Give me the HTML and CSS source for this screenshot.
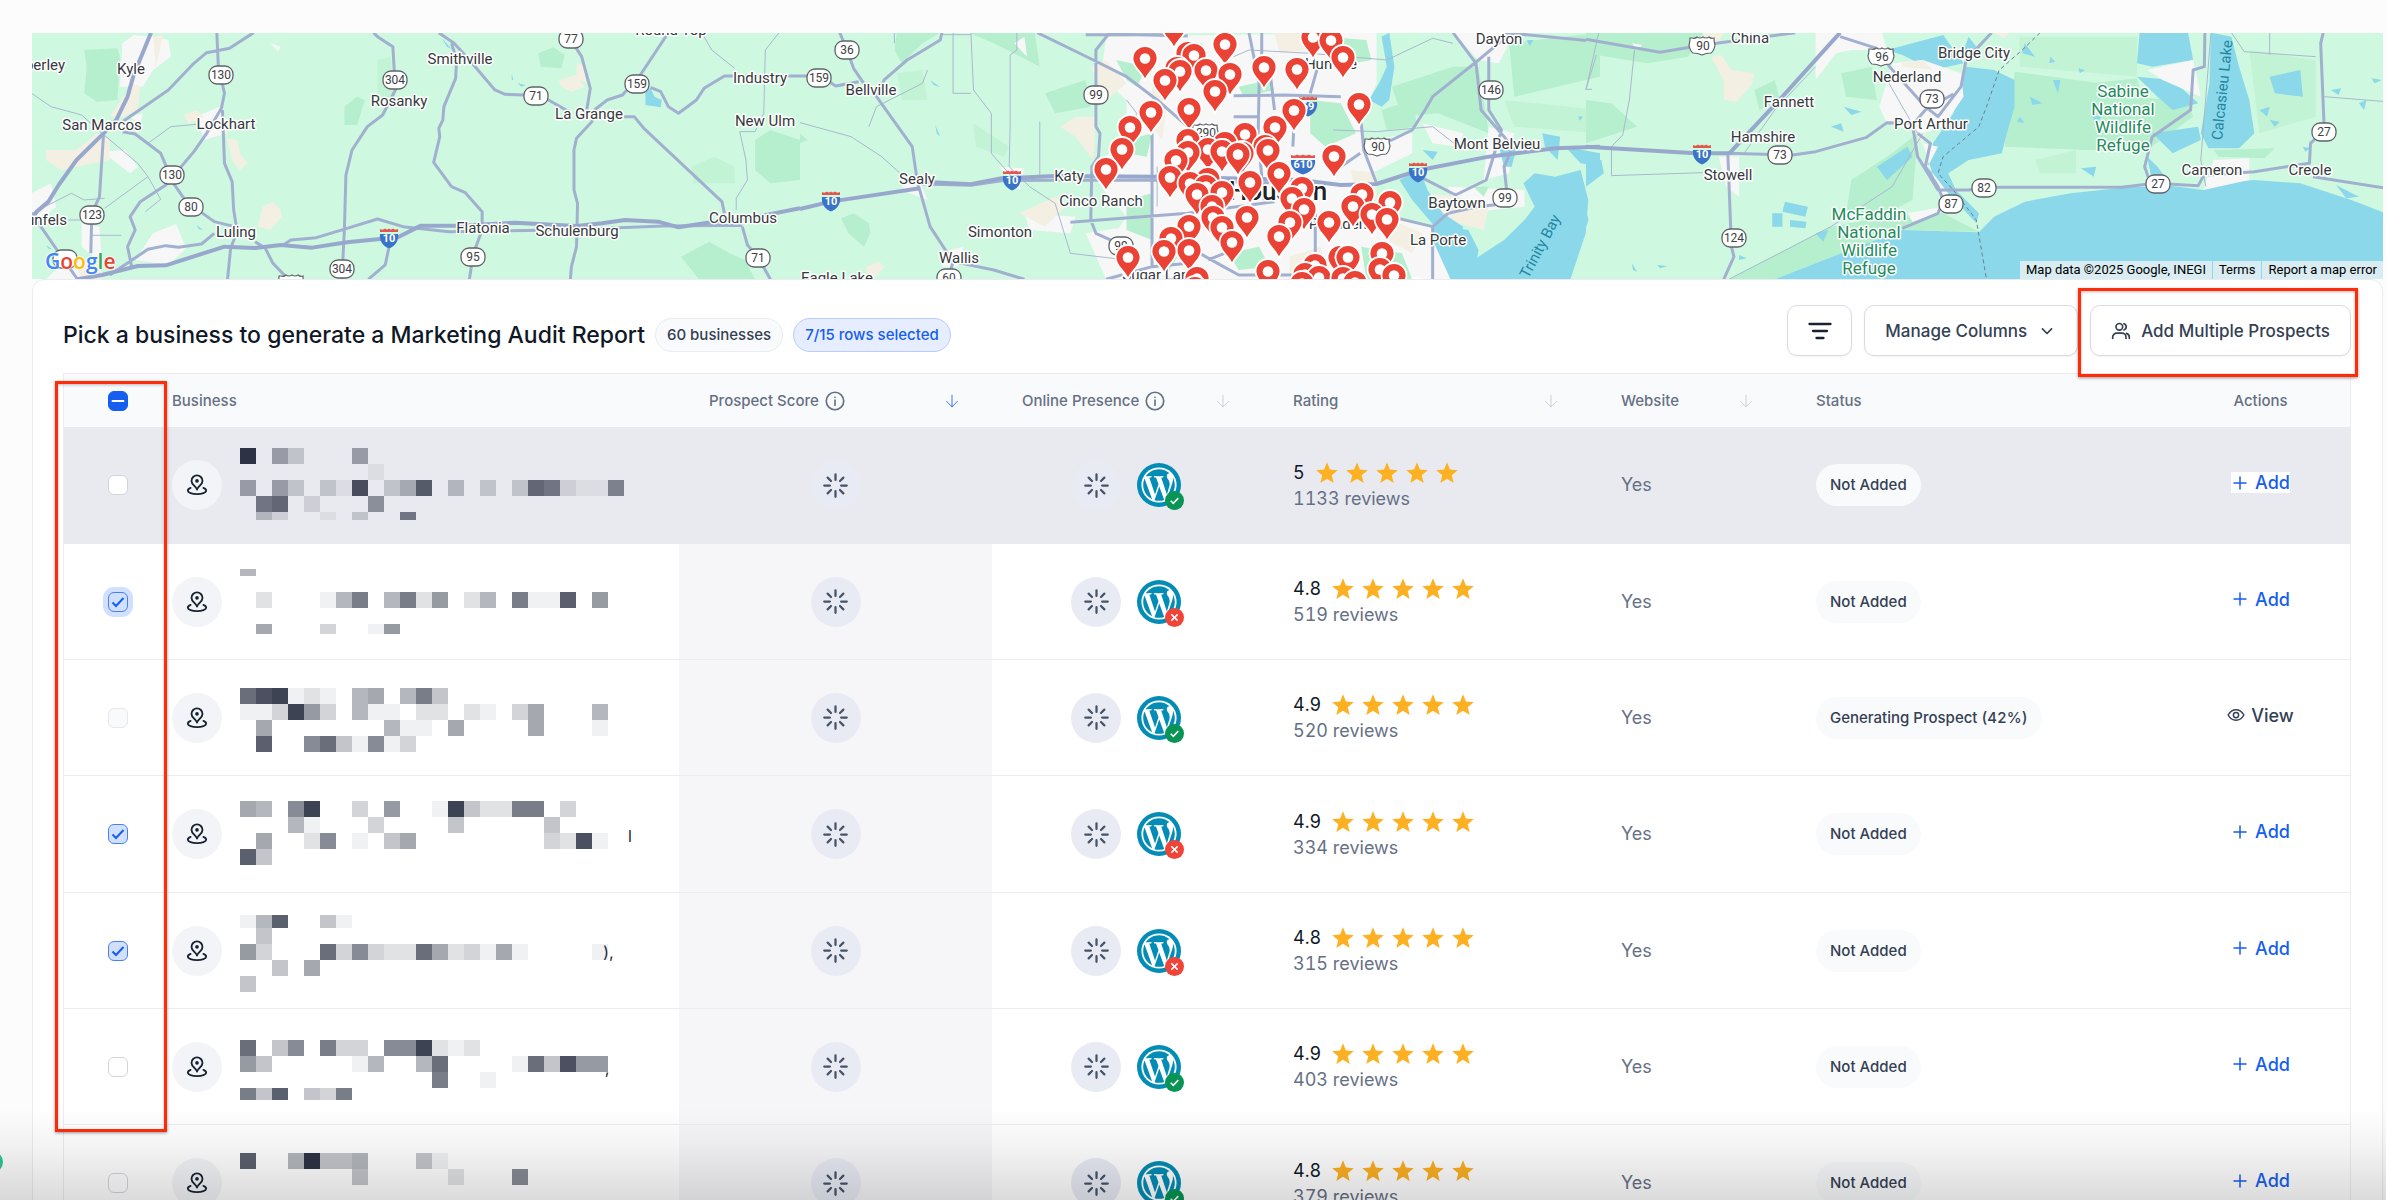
FILE: index.html
```html
<!DOCTYPE html>
<html lang="en">
<head>
<meta charset="utf-8">
<title>Marketing Audit Report</title>
<link rel="stylesheet" href="styles.css">
</head>
<body>
<svg class="sprite" aria-hidden="true">
  <symbol id="i-place" viewBox="0 0 24 24"><path d="M5 15.2C3.2 15.9 2 17 2 18.2C2 20.3 6.5 22 12 22s10-1.7 10-3.8c0-1.2-1.200-2.300-3-3M12 17c1-3.500 6-5.300 6-9.500A6 6 0 0 0 6 7.500C6 11.700 11 13.500 12 17Z"/><circle cx="12" cy="7.500" r="1"/></symbol>
  <symbol id="i-load" viewBox="0 0 24 24"><path d="M12 2v5M12 17v5M2 12h5M17 12h5M5 5l3 3M16 16l3 3M5 19l3-3M16 8l3-3"/></symbol>
  <symbol id="i-info" viewBox="0 0 24 24"><circle cx="12" cy="12" r="10.500"/><path d="M12 17v-6M12 7.600v.2"/></symbol>
  <symbol id="i-down" viewBox="0 0 24 24"><path d="M12 5v14M5.500 12.500 12 19l6.500-6.500"/></symbol>
  <symbol id="i-chevron" viewBox="0 0 24 24"><path d="m6.500 9.500 5.500 5.500 5.500-5.500"/></symbol>
  <symbol id="i-filter" viewBox="0 0 24 24"><path d="M3 6h18M6 12h12M9 18h6"/></symbol>
  <symbol id="i-users" viewBox="0 0 24 24"><circle cx="10" cy="7" r="4"/><path d="M2 21v-1.500A5 5 0 0 1 7 14.500h6a5 5 0 0 1 5 5V21M15.500 3.200a4 4 0 0 1 0 7.600M18.500 14.800a5 5 0 0 1 3.500 4.700V21"/></symbol>
  <symbol id="i-plus" viewBox="0 0 24 24"><path d="M12 4v16M4 12h16"/></symbol>
  <symbol id="i-eye" viewBox="0 0 24 24"><path d="M1.500 12C4 7.500 7.500 5 12 5s8 2.500 10.500 7C20 16.500 16.500 19 12 19S4 16.500 1.500 12Z"/><circle cx="12" cy="12" r="3.500"/></symbol>
  <symbol id="i-star" viewBox="0 0 24 24"><path d="m12 1.300 2.900 7.300 7.900.6-6.100 5.100 2 7.700L12 17.700l-6.700 4.300 2-7.700L1.200 9.200l7.900-.6Z"/></symbol>
  <symbol id="i-wp" viewBox="0 0 44 44"><circle cx="22" cy="22" r="22" fill="#038cb5"/><circle cx="22" cy="22" r="17.600" fill="#fff"/><path fill="#038cb5" transform="translate(4.430 4.430) scale(1.464)" d="M21.469 6.825c.84 1.537 1.318 3.300 1.318 5.175 0 3.979-2.156 7.456-5.363 9.325l3.295-9.527c.615-1.540.820-2.771.820-3.864 0-.405-.026-.780-.070-1.110m-7.981.105c.647-.030 1.232-.105 1.232-.105.582-.075.514-.930-.067-.899 0 0-1.755.135-2.880.135-1.064 0-2.850-.150-2.850-.150-.585-.030-.661.855-.075.885 0 0 .540.061 1.125.090l1.680 4.605-2.370 7.080L5.354 6.900c.649-.030 1.234-.100 1.234-.100.585-.075.516-.930-.065-.896 0 0-1.746.138-2.874.138-.200 0-.438-.008-.690-.015C4.911 3.150 8.235 1.215 12 1.215c2.809 0 5.365 1.072 7.286 2.833-.046-.003-.091-.009-.141-.009-1.060 0-1.812.923-1.812 1.914 0 .890.513 1.643 1.060 2.531.411.720.890 1.643.890 2.977 0 .915-.354 1.994-.821 3.479l-1.075 3.585-3.900-11.610zM12 22.784c-1.059 0-2.081-.153-3.048-.437l3.237-9.406 3.315 9.087c.024.053.050.101.078.149-1.120.393-2.325.609-3.582.609M1.211 12c0-1.564.336-3.050.935-4.390L7.290 21.709C3.694 19.960 1.212 16.271 1.211 12"/></symbol>
  <symbol id="i-ok" viewBox="0 0 20 20"><circle cx="10" cy="10" r="10" fill="#079455"/><path d="m6 10.300 2.700 2.700L14 7.500" fill="none" stroke="#fff" stroke-width="1.600"/></symbol>
  <symbol id="i-no" viewBox="0 0 20 20"><circle cx="10" cy="10" r="10" fill="#f04438"/><path d="m6.700 6.700 6.600 6.600m0-6.600-6.600 6.600" fill="none" stroke="#fff" stroke-width="1.600"/></symbol>
</svg>

<main class="page">
  <section class="map" aria-label="Map">
    <svg class="map-canvas" viewBox="32 33 2351 246" preserveAspectRatio="xMidYMid slice">
      <defs>
        <g id="pin"><path d="M0 0C-2-8.500-12.500-13-12.500-22.500A12.500 12.500 0 0 1 12.500-22.500C12.500-13 2-8.500 0 0Z" fill="#ea4335" stroke="#fff" stroke-width="1.800"/><circle cy="-22.500" r="5.300" fill="#fff"/></g>
        <g id="s-state"><rect x="-12" y="-9" width="24" height="18" rx="8" fill="#fff" stroke="#5f6368" stroke-width="1.300"/></g>
        <g id="s-us"><path d="M-11-8q3 1 5-1 3 2 6 0 3 2 6 0 2 2 5 1 0 4 1 7-1 6-4 8-5 0-9 2-4-2-9-2-3-2-4-8 1-3 1-7Z" fill="#fff" stroke="#5f6368" stroke-width="1.200"/></g>
        <g id="s-int"><path d="M-9-4C-10 3-6 8 0 10.500 6 8 10 3 9-4Z" fill="#3a74c8"/><path d="M-9-6v-3q3 1.500 5-.5 2 2 4 0 2 2 4 0 2 2 5 .5v3Z" fill="#e2574c"/></g>
        <g id="s-wide"><path d="M-12-4C-13 3-8 8 0 10.500 8 8 13 3 12-4Z" fill="#3a74c8"/><path d="M-12-6v-3q4 1.500 6-.5 3 2 6 0 3 2 6 0 2 2 6 .5v3Z" fill="#e2574c"/></g>
      </defs>
      <rect x="32" y="33" width="2351" height="246" fill="#cff8e0"/>

      <g transform="scale(.5102 .3333)">
        <path class="wood" d="M165 150 230 145 235 170 230 300 190 305 165 280 170 200ZM675 320 700 290 715 300 700 375 675 375ZM1055 160 1085 142 1107 165 1100 205 1060 200ZM1480 420 1510 390 1568 420V540L1510 550 1480 510ZM1375 488 1395 488V530L1375 525ZM1335 770 1390 725 1430 760 1460 780 1480 838H1370Z"/>
        <path class="wood pale" d="M740 180 765 170 775 300 740 290ZM1355 500 1400 470 1440 500V550H1360Z"/>
        <path class="urban" d="M240 130 262 105 300 110 330 120 335 170 300 210 280 260 235 260ZM385 350 430 320 445 400 400 420ZM200 455 245 450 270 500 255 520ZM265 780 300 700 345 672 365 745 330 795ZM62 580 100 550 110 620 62 680ZM160 670 195 680 200 790 160 740ZM530 130 550 140 545 155ZM90 838 130 780 200 790 190 838ZM255 350 280 340 275 375Z"/>
        <path class="sand" d="M300 110 320 105 305 200ZM260 250 275 260 270 330 240 350 215 350ZM90 450 150 450 190 400 215 420 215 480 150 500 120 510 90 480ZM360 345 385 330 400 350 370 372ZM445 415 465 420 470 460 485 490 470 510 455 480ZM505 680 515 620 535 605 550 630 552 650 530 690ZM1095 240 1130 225 1145 260 1120 275 1100 260ZM1130 190 1145 195 1150 250 1130 235ZM150 800 200 790 200 838H160Z"/>
        <path class="water" d="M1265 265H1275L1283 290 1297 300 1295 322 1265 315ZM866 115 886 148 876 140ZM1003 220 1006 240 1003 240ZM1015 250 1030 255 1022 260ZM385 675 398 690 390 688ZM90 735 102 748 95 746Z"/>
        <path class="minor" d="M1380 110 1395 150 1440 205M1527 98 1500 150 1497 340 1480 395H1450L1462 480 1465 540 1443 595V630M62 280 100 320 160 345 200 400 270 490 290 530 315 598 285 635M385 373 335 380 290 430M290 530 205 625M62 640 140 580 165 600 205 595M180 706H238M130 660H170"/>
        <path class="road" d="M425 98 428 200 440 280 434 325 405 400 380 455 325 555 275 605 255 650 265 690 250 740 258 800M497 98 450 145 405 158 380 190 330 270 240 365M436 330 440 490 455 545 458 630 465 695 452 745 446 838M240 395 265 402 315 460 340 550 365 605 420 665 460 680M203 400 195 590 180 640 178 760M62 640 130 790 152 838M555 735 570 720 620 713 680 685 740 657 790 680 880 695 1100 690 1300 678 1455 676M215 825 290 748 325 737 350 742 395 732 420 700M500 725 520 745 535 790 560 830M732 98 740 110 770 140 775 270 750 345 720 380 690 450 678 525 675 690 670 838M762 745 755 795 722 838M860 98 890 130 920 180 970 270 990 283 1030 285 1075 300 1115 335M885 130 895 180 893 235 870 320 868 360 860 385 862 410 850 487 885 560 912 578 945 635 945 690 928 760 920 838M1110 98 1140 170 1157 265 1150 330M1165 345 1160 365 1130 415 1125 450 1125 570 1132 610 1130 740 1120 800 1118 838M1310 98 1255 225 1220 285 1190 300 1165 330M1220 350 1243 350 1262 385 1415 605 1420 640M1455 680 1465 735 1485 770 1510 838M1275 262 1295 275 1310 320 1330 340 1365 300 1380 265 1420 228H1568"/>
        <path class="road wide" d="M296 98 262 225 250 290 228 360 203 400 150 480 115 555 95 605 72 635 62 660M152 838 200 825 270 798 325 796 440 740 500 744 550 735 612 743 680 727 780 712 825 677 900 677 1010 668 1130 678 1180 670 1225 660 1290 665 1330 682 1400 665 1450 660 1568 625"/>
      </g>

      <g transform="translate(800) scale(.5102 .3333)">
        <path class="wood" d="M80 655 105 640 135 670 138 700 125 740 95 700ZM190 98 275 98 240 130 200 190 185 150ZM330 98 460 98 470 200 380 130ZM1160 260 1280 200 1330 200 1350 400 1250 340 1180 350ZM1390 130 1568 98V230L1400 290ZM0 400 15 420 0 430ZM480 280 560 240 570 320 500 340Z"/>
        <path class="wood pale" d="M340 370 410 440 400 470 345 440ZM190 220 240 210 250 300 200 300ZM1380 300 1568 330V400L1400 380ZM600 98 700 98 690 160 620 170Z"/>
        <path class="urban" d="M600 110 1130 98 1130 250 1100 350 1110 500 1130 640 1240 680 1240 838H600V740L640 650 590 560 600 470 640 400V300L590 230ZM200 560 230 530 250 600 215 580ZM270 760 320 740 310 800 280 800ZM390 500 440 505 430 570ZM1280 98 1400 98 1370 190 1330 180ZM1220 370 1300 400 1290 440 1240 430ZM1350 380 1400 400 1390 520 1340 540ZM1200 700 1260 690 1300 838H1220ZM1040 440 1200 400 1200 460 1120 520 1040 530ZM440 640 540 650 530 700 450 690ZM1270 560 1420 570 1420 620 1290 640ZM420 130 440 110 445 170ZM560 700 640 680 640 838H600Z"/>
        <path class="sand" d="M510 380 540 350 580 350 575 480 540 410ZM570 200 600 180 640 250 600 300ZM430 640 500 590 520 620 480 680ZM130 800 155 785 165 800 145 838H130ZM1230 580 1290 590 1350 620 1340 690 1240 650ZM930 98 990 98 990 150 940 160ZM690 250 720 300 710 420 690 380ZM1080 510 1130 520 1130 600 1090 590ZM960 770 1020 740 1040 838H960ZM1160 660 1220 700 1200 760 1150 720Z"/>
        <path class="wood" d="M640 600 690 580 690 720 640 690ZM620 180 680 200 660 260 640 240ZM860 260 920 240 930 270 870 290ZM1000 300 1060 310 1090 400 1030 440 1000 400ZM640 420 690 400 680 470 640 460ZM1030 110 1110 120 1120 180 1050 200ZM840 760 900 740 920 800 860 810ZM1100 740 1180 760 1200 838H1110ZM690 760 740 770 720 820ZM740 140 790 130 780 160ZM1140 330 1200 300 1210 380 1150 390ZM1320 560 1350 560 1340 590Z"/>
        <path class="water" d="M1418 550 1440 520 1480 530 1530 510 1545 600 1540 700 1510 838H1285L1330 770 1380 720 1420 660 1440 620ZM1240 650 1270 680 1310 690 1330 750 1320 838H1275L1240 720ZM1175 540 1215 510 1230 570 1260 640 1300 680 1290 720 1250 690 1200 600ZM1140 110 1155 98 1165 200 1155 300 1140 320 1115 300 1135 250 1150 200ZM1455 400 1490 410 1485 480 1460 440ZM1370 440 1405 440 1395 500 1380 500ZM1220 450 1250 455 1240 480ZM1125 415 1150 430 1130 445ZM1500 440 1568 460V500L1530 490ZM1525 348 1535 350 1528 362ZM1424 120 1438 120 1430 138ZM265 375 275 410 268 400ZM255 240 275 262 262 255Z"/>
        <path class="minor" d="M425 98V150L412 165V370L410 500 450 560 500 610M415 530 375 460V340L340 270 335 98M300 98V280H335M0 368 100 410 160 470 200 525M250 210 240 250 150 320 135 380M500 610 530 760 640 780M850 170 880 150 1000 160 1150 180 1240 115M1130 395 1240 380 1290 440M1045 390 1130 395M1568 130 1540 270M1240 115 1280 130M640 300 660 340 640 420M700 500 700 620M275 104H335M470 365V540M185 98V130"/>
        <path class="road" d="M78 98 92 150 105 205 125 250 150 290 220 440 230 545 255 680 300 785 380 810 440 838M300 785 290 838M278 98 275 120 210 180 165 240 150 290M0 228H40L70 258 115 245M465 98 575 180 640 230 700 300 760 380M760 108 605 102 580 150V380L588 400 585 470 572 500 570 660 580 700 630 735M530 667 760 640 930 605M690 400V800M600 838 690 800 760 790M850 287 950 285 1060 290M880 98 900 250 898 400 905 530 910 600M905 98V200M920 200 930 330M1015 200 1000 280M968 380 966 440M1100 370 1105 450 1130 550M1098 460 1060 500M1130 430 1160 420 1200 390 1225 330 1240 290 1330 180 1385 110M1280 98 1325 190 1335 330 1380 410 1390 430M1350 170V330L1375 390 1345 540 1285 585 1215 530M1395 450 1380 500 1385 570M1130 640 1240 680V838M1240 680 1270 640 1330 620 1385 610M1380 98 1568 125M850 350H900M760 740 830 800 860 825H980M800 780 840 755M1010 640V760M240 552 335 556 395 542 500 541 700 541 920 548M560 104H720"/>
        <path class="road wide" d="M0 627 60 605 235 565M240 545 335 553 395 535 500 528 700 530 980 540 1060 555 1130 552 1215 510 1350 470 1480 445 1568 440"/>
      </g>

      <g transform="translate(1586) scale(.5102 .3333)">
        <path class="wood" d="M0 98H230L200 170 120 190 0 160ZM0 300 50 310 100 380 0 430ZM280 838 480 680 620 640 700 640 770 695 620 690 500 760 370 838ZM520 540 600 460 650 400 640 600 590 640 510 640ZM840 215 1000 248 1080 235 1090 290 1180 310 1190 350 1100 450 980 450 820 440 835 300ZM500 220 560 200 570 300 510 290ZM1230 450 1350 445 1330 475 1240 470ZM330 270 370 240 380 300 340 330Z"/>
        <path class="wood pale" d="M850 110 1080 110 1080 230 850 200ZM880 480 960 450 960 520 890 520ZM1300 150 1430 180 1430 350 1320 400Z"/>
        <path class="water" d="M370 838 500 760 620 690 770 697 800 650 860 605 950 580 1060 562 1150 558 1210 570 1240 550 1310 540 1400 550 1500 600 1568 640V838ZM745 200 800 210 840 240V320L825 400 815 460 750 480 710 520 725 570 770 640 765 670 735 620 690 560 670 500 680 430 720 340ZM1225 98 1265 110 1280 200 1300 300 1310 400 1280 445 1220 445 1205 400 1222 250ZM1085 98 1180 98 1190 180 1110 200 1080 190ZM1080 230 1150 240 1200 310 1150 330 1120 290ZM1110 400 1200 380 1205 420 1150 460ZM590 150 700 105 740 190 680 210 620 165ZM1340 230 1400 210 1405 290 1350 280ZM1100 470 1120 500 1140 540 1110 545ZM390 605 435 620 430 650 385 635ZM365 640H385V680H365ZM400 660 432 665 430 685 400 680ZM1470 555 1515 590 1490 595ZM0 470 30 480 35 520 0 560ZM0 630 5 660 0 680ZM480 380 500 370 505 395ZM505 320 540 335 520 345ZM870 290 895 310 875 315ZM915 240 930 240 925 280ZM965 205 978 210 968 220ZM990 345 1010 350 1000 370ZM970 505 1000 500 995 530ZM850 350 860 370 845 365ZM1320 330 1340 320 1335 350ZM1405 440 1420 445 1410 455ZM450 700 475 690 465 725ZM1460 270 1480 265 1475 285ZM1515 310 1530 300 1525 330ZM1540 235 1560 240 1545 250ZM570 500 630 440 640 470 590 540ZM750 110 770 150 740 150ZM90 790 100 815 92 810ZM140 795 160 798 145 805ZM300 765 315 775 300 780ZM860 130 880 170 855 160ZM910 170 920 185 908 190ZM1340 360 1360 365 1350 380ZM1280 310 1300 315 1290 330Z"/>
        <path class="urban" d="M450 98H580L590 150 520 150 490 160 450 240ZM600 190 660 180 735 220 740 290 700 380 660 400 590 370 575 320ZM660 430 690 440 670 500 720 600 700 620ZM1100 210 1190 180 1205 290 1130 240ZM1230 480 1300 475V540L1210 570ZM260 470 300 470 300 590 275 560ZM630 640 700 620 690 640 640 665ZM90 130 110 135 100 150Z"/>
        <path class="sand" d="M245 170 265 165 285 210 330 220 325 255 295 305 270 300 270 240ZM620 190 660 180 680 210 620 200ZM800 98 830 98 820 115ZM230 98 270 98 260 130 235 120ZM645 400 665 400 660 430Z"/>
        <path class="minor" d="M50 440V527L230 518M95 150 85 300 72 405 50 440M25 98 0 268M0 268H12M1265 98 1290 155 1430 170M1340 98V165M1447 290 1568 305M310 460 370 330 450 200M590 240 650 400M1225 98 1205 480 1215 560M660 400 600 560 480 680 280 838"/>
        <path class="road" d="M0 118 145 157 230 135 410 98M280 460 405 465 450 455 550 412 590 368 640 370M498 110 570 145 595 200 665 320 690 350 735 260 745 180 795 98M720 282 665 330 640 375 650 470 680 545 690 570 750 570 780 562 1050 562 1115 550 1200 557 1220 500M650 400 675 430 665 500 690 560 700 600 690 640 620 685M1213 98 1212 200 1190 210 1185 330 1110 410 1095 500 1105 545M1445 98 1440 130 1447 390 1420 430 1418 490 1310 515 1220 525M1425 530 1568 565M278 460 285 740 290 770 270 838"/>
        <path class="road wide" d="M0 440 215 460 280 460M280 462 385 290 498 98"/>
        <path class="border-line" d="M890 98 855 150 810 210 785 320 770 380 700 470 690 520 720 570 765 660 785 838"/>
      </g>

      <g id="shields" class="shields"></g>
      <g id="places" class="places"></g>
      <g id="pins"></g>
    </svg>
    <a class="google" href="#maps" aria-label="Google"><span class="g-blue">G</span><span class="g-red">o</span><span class="g-yellow">o</span><span class="g-blue">g</span><span class="g-green">l</span><span class="g-red">e</span></a>
    <div class="legal"><span>Map data ©2025 Google, INEGI</span><a href="#terms">Terms</a><a href="#report">Report a map error</a></div>
  </section>

  <section class="card">
    <header class="toolbar">
      <div class="heading">
        <h1>Pick a business to generate a Marketing Audit Report</h1>
        <span class="tag">60 businesses</span>
        <span class="tag tag-blue">7/15 rows selected</span>
      </div>
      <div class="tools">
        <button class="btn btn-icon" type="button" aria-label="Filter"><svg class="ico"><use href="#i-filter"/></svg></button>
        <button class="btn" type="button">Manage Columns<svg class="ico"><use href="#i-chevron"/></svg></button>
        <div class="marked">
          <button class="btn" type="button"><svg class="ico"><use href="#i-users"/></svg>Add Multiple Prospects</button>
          <div class="mark mark-button"></div>
        </div>
      </div>
    </header>
    <div class="table-wrap">
      <table>
        <colgroup><col class="c-check"><col><col class="c-score"><col class="c-online"><col class="c-rating"><col class="c-site"><col class="c-status"><col class="c-actions"></colgroup>
        <thead>
          <tr>
            <th class="check"><input class="box some" type="checkbox" aria-label="Select all rows"></th>
            <th class="biz">Business</th>
            <th><div class="th">Prospect Score<svg class="ico info"><use href="#i-info"/></svg><svg class="ico sort on"><use href="#i-down"/></svg></div></th>
            <th><div class="th">Online Presence<svg class="ico info"><use href="#i-info"/></svg><svg class="ico sort"><use href="#i-down"/></svg></div></th>
            <th><div class="th">Rating<svg class="ico sort"><use href="#i-down"/></svg></div></th>
            <th><div class="th">Website<svg class="ico sort"><use href="#i-down"/></svg></div></th>
            <th>Status</th>
            <th class="act">Actions</th>
          </tr>
        </thead>
        <tbody id="rows"></tbody>
      </table>
      <div class="mark mark-column"></div>
    </div>
  </section>
</main>
<div class="chat-dot"></div>
<div class="fade"></div>
<script src="app.js"></script>
</body>
</html>
```
FILE: styles.css
```css
* { box-sizing: border-box; }
body {
  margin: 0;
  height: 100vh;
  overflow: hidden;
  position: relative;
  background: #fcfcfc;
  font-family: Inter, "Liberation Sans", sans-serif;
  color: #101828;
}
.sprite { position: absolute; width: 0; height: 0; }
.page { padding: 33px 3px 0 32px; }
.ico { width: 20px; height: 20px; flex: none; fill: none; stroke: currentColor; stroke-width: 2; stroke-linecap: round; stroke-linejoin: round; }

/* map */
.map { position: relative; height: 246px; overflow: hidden; font-family: Roboto, sans-serif; }
.map-canvas { display: block; width: 100%; height: 100%; }
.wood { fill: #b6efcd; }
.wood.pale { fill: #c2f3d5; }
.urban { fill: #f7f7f8; }
.sand { fill: #f4efe3; }
.water { fill: #8bd8ea; }
.road, .minor, .border-line { fill: none; stroke: #a2b0d0; stroke-width: 3; stroke-linejoin: round; vector-effect: non-scaling-stroke; }
.road.wide { stroke: #98a8cc; stroke-width: 4; }
.minor { stroke: #a9b8d0; stroke-width: 1; }
.border-line { stroke: #6f7f95; stroke-width: 1; stroke-dasharray: 4 3; }
.places text { font-size: 15px; fill: #36393d; text-anchor: middle; paint-order: stroke; stroke: #fff; stroke-width: 3px; stroke-linejoin: round; }
.places .end { text-anchor: end; }
.places .city { font-size: 26px; font-weight: 500; fill: #202124; }
.places .park { font-size: 17px; fill: #238a5c; }
.places .sea { font-size: 15px; fill: #1f87a0; stroke: none; }
.shields text { font-size: 12px; fill: #3c4043; text-anchor: middle; }
.shields .int, .shields .wide { fill: #fff; font-size: 11px; font-weight: 700; }
.google { position: absolute; left: 13px; bottom: 2px; font: 600 21px/32px "Open Sans", sans-serif; text-decoration: none; text-shadow: 0 0 2px #fff, 0 0 2px #fff, 0 0 2px #fff; }
.g-blue { color: #4285f4; }
.g-red { color: #ea4335; }
.g-yellow { color: #fbbc04; }
.g-green { color: #34a853; }
.legal { position: absolute; right: 0; bottom: 0; display: flex; gap: 1px; font-size: 13px; line-height: 18px; }
.legal > * { padding: 0 6px; background: #d8ecf2; color: #000; text-decoration: none; }

/* card */
.card { background: #fff; border: 1px solid #eaecf0; border-radius: 12px; padding: 25px 31px 0 30px; min-height: 940px; }
.toolbar { display: flex; justify-content: space-between; align-items: flex-start; margin-bottom: 17px; }
.heading { display: flex; align-items: center; padding-top: 13px; gap: 10px; }
h1 { margin: 0; font-size: 23px; line-height: 34px; font-weight: 500; }
.tag { border: 1px solid #eaecf0; background: #f9fafb; border-radius: 17px; padding: 0 11px; font-size: 15px; line-height: 32px; font-weight: 500; color: #344054; white-space: nowrap; }
.tag-blue { background: #e6edff; border-color: #b8ccff; color: #155eef; }
.tools { display: flex; gap: 12px; }
.btn { display: flex; align-items: center; gap: 10px; height: 51px; padding: 0 20px; border: 1px solid #d8dbe2; border-radius: 10px; background: #fff; box-shadow: 0 1px 2px #1018280d; font: 500 17px/24px Inter, sans-serif; color: #344054; white-space: nowrap; }
.btn-icon { width: 65px; padding: 0; justify-content: center; color: #182230; }
.btn-icon .ico { width: 28px; height: 28px; }
.marked { position: relative; z-index: 1; }
.mark { position: absolute; border: 3px solid #ff2c08; box-shadow: 0 1px 3px #0006, inset 0 1px 3px #0004; pointer-events: none; }
.mark-button { left: -12px; right: -7px; top: -17px; bottom: -21px; }
.mark-column { left: -9px; top: 7px; width: 112px; height: 751px; }

/* table */
.table-wrap { position: relative; border: 1px solid #eaecf0; border-bottom: 0; }
table { width: 100%; table-layout: fixed; border-collapse: separate; border-spacing: 0; }
.c-check { width: 108px; }
.c-score { width: 313px; }
.c-online { width: 271px; }
.c-rating { width: 328px; }
.c-site { width: 195px; }
.c-status { width: 385px; }
.c-actions { width: 179px; }
th { height: 53px; padding: 0 30px; background: #f9fafc; text-align: left; font-size: 15px; line-height: 20px; font-weight: 500; color: #667085; }
.th { display: flex; align-items: center; gap: 6px; }
.sort { margin-left: auto; color: #c3c8d2; stroke-width: 1; }
.sort.on { color: #155eef; }
td { height: 116px; padding: 0 30px; border-bottom: 1px solid #eaecf0; font-size: 18px; line-height: 24px; font-variant-numeric: tabular-nums; color: #667085; }
tr:nth-child(3n+1) td { height: 117px; }
.check, .act { padding: 0; text-align: center; }
.biz { padding: 0; }
td:nth-child(3) { background: #f6f6f9; }
.hover td { background: #e9eaef; border-color: #e9eaef; }
.box { appearance: none; display: block; width: 20px; height: 20px; margin: 0 auto; border: 1px solid #d0d5dd; border-radius: 6px; background: #fff; }
.box:disabled { background: #f9fafb; border-color: #e4e7ec; }
.box:checked { border-color: #4a80f5; background: #d1e0ff url("data:image/svg+xml,%3Csvg xmlns='http://www.w3.org/2000/svg' viewBox='0 0 18 18'%3E%3Cpath d='M3.500 9.500 7 13l7.500-8' fill='none' stroke='%23155eef' stroke-width='2'/%3E%3C/svg%3E"); }
.box.ring { box-shadow: 0 0 0 5px #d1e0ff; }
.box.some { border-color: #155eef; background: #155eef url("data:image/svg+xml,%3Csvg xmlns='http://www.w3.org/2000/svg' viewBox='0 0 18 18'%3E%3Cpath d='M3.500 9h11' stroke='%23fff' stroke-width='2' stroke-linecap='round'/%3E%3C/svg%3E"); }
.who { display: flex; align-items: center; gap: 18px; }
.disc { display: flex; align-items: center; justify-content: center; width: 50px; height: 50px; flex: none; border-radius: 50%; background: #f2f4f7; color: #182230; }
.disc .ico { width: 22px; height: 22px; }
.disc.load { background: #e8ebf4; color: #475467; }
.disc.load .ico { width: 27px; height: 27px; }
.mosaic { display: block; width: 410px; height: 115px; fill: #1e2638; font-size: 16px; }
.pair { display: flex; align-items: center; justify-content: center; gap: 16px; padding-right: 3px; }
.score { display: flex; justify-content: center; }
.wp { position: relative; width: 44px; height: 44px; }
.wp svg { display: block; width: 44px; height: 44px; }
.wp .badge { position: absolute; right: -3px; bottom: -3px; width: 19px; height: 19px; }
.stars { display: flex; align-items: center; gap: 6px; padding-top: 1px; color: #101828; }
.stars b { font-weight: 400; margin-right: 4px; }
.stars .star { width: 24px; height: 24px; fill: #fdb022; }
.reviews { margin: 2px 0 0; }
.pill { display: inline-block; padding: 0 14px; border-radius: 21px; background: #f9fafb; font-size: 15px; line-height: 42px; font-weight: 500; color: #344054; }
.link { display: inline-flex; align-items: center; gap: 6px; padding: 0; border: 0; background: #fff; font: 500 18px/21px Inter, sans-serif; color: #155eef; }
.link .ico { width: 18px; height: 18px; }
.link.view { color: #344054; }

.fade { position: absolute; left: 0; right: 0; bottom: 0; height: 92px; background: linear-gradient(#0000, #0000000b 40%, #00000024); pointer-events: none; }
.chat-dot { position: absolute; left: -19px; bottom: 27px; width: 22px; height: 22px; border-radius: 50%; background: #2ac891; }
```
FILE: app.js
```js
// Redacted business details: one hex digit per 16px cell gives how dark it is.
const rows = [
  { hover: true, rating: "5", reviews: 1133, ok: true, blocks: [
    [20, 16, "e.63...6"], [36, 16, "........1"], [52, 16, "6.63.31c.35b.4.3.3a92118"], [68, 16, ".9a.2...7"], [84, 8, ".42..1.3..9"]] },
  { checked: true, ring: true, rating: "4.8", reviews: 519, blocks: [
    [25, 7, "5"], [48, 16, ".2...159.5927.25.911b.7"], [80, 10, ".6...3..17"]] },
  { disabled: true, rating: "4.9", reviews: 520, ok: true, status: "Generating Prospect (42%)", blocks: [
    [28, 16, "acd121.56.594"], [44, 16, "113d73.511.22.21.36...5"], [60, 16, ".6.......511.6....6...1"], [76, 16, ".b..8a41813"]] },
  { checked: true, rating: "4.9", reviews: 334, extra: [388, 65, "l"], blocks: [
    [24, 16, "65.8d..3.7..1d42299.3"], [40, 16, "...51...3....4.....4"], [56, 16, ".6..28.1.46........32c1"], [72, 16, "b4"]] },
  { checked: true, rating: "4.8", reviews: 315, extra: [363, 65, "),"], blocks: [
    [22, 13, "15b..41"], [35, 16, ".4"], [51, 16, "73...a38322a623161....1"], [67, 16, "..4.6"], [83, 16, "4"]] },
  { rating: "4.9", reviews: 403, ok: true, extra: [365, 65, ","], blocks: [
    [31, 16, "a.48.933.88d212"], [47, 16, "74.....15..5a....1a4c77"], [63, 16, "............9..1"], [79, 12, "94b.439"]] },
  { rating: "4.8", reviews: 379, ok: true, blocks: [
    [27, 16, "b..5e445...41"], [43, 16, ".......4.....2...8"]] }
];

const icon = (name, cls = "ico") => `<svg class="${cls}"><use href="#i-${name}"/></svg>`;
const spinner = `<div class="disc load">${icon("load")}</div>`;

function mosaic(row) {
  let cells = "";
  for (const [y, h, line] of row.blocks)
    [...line].forEach((c, i) => {
      if (c !== ".") cells += `<rect x="${i * 16}" y="${y}" width="16" height="${h}" opacity="${parseInt(c, 16) / 15}"/>`;
    });
  if (row.extra) cells += `<text x="${row.extra[0]}" y="${row.extra[1]}">${row.extra[2]}</text>`;
  return `<svg class="mosaic">${cells}</svg>`;
}

document.getElementById("rows").innerHTML = rows.map((r, n) => `
  <tr class="${r.hover ? "hover" : ""}">
    <td class="check"><input class="box ${r.ring ? "ring" : ""}" type="checkbox" aria-label="Select row ${n + 1}" ${r.checked ? "checked" : ""} ${r.disabled ? "disabled" : ""}></td>
    <td class="biz"><div class="who"><div class="disc">${icon("place")}</div>${mosaic(r)}</div></td>
    <td><div class="score">${spinner}</div></td>
    <td><div class="pair">${spinner}<div class="wp">${icon("wp", "logo")}${icon(r.ok ? "ok" : "no", "badge")}</div></div></td>
    <td><div class="stars"><b>${r.rating}</b>${icon("star", "star").repeat(5)}</div><p class="reviews">${r.reviews} reviews</p></td>
    <td>Yes</td>
    <td><span class="pill">${r.status || "Not Added"}</span></td>
    <td class="act">${r.status ? `<button class="link view" type="button">${icon("eye")}View</button>` : `<button class="link" type="button">${icon("plus")}Add</button>`}</td>
  </tr>`).join("");

const places = [
  [65, 65, "Wimberley", "end"], [131, 69, "Kyle"], [102, 125, "San Marcos"], [226, 124, "Lockhart"], [399, 101, "Rosanky"],
  [460, 59, "Smithville"], [671, 30, "Round Top"], [589, 114, "La Grange"], [760, 78, "Industry"], [765, 121, "New Ulm"],
  [743, 218, "Columbus"], [577, 231, "Schulenburg"], [483, 228, "Flatonia"], [236, 232, "Luling"], [67, 220, "New Braunfels", "end"],
  [1499, 39, "Dayton"], [871, 90, "Bellville"], [1497, 144, "Mont Belvieu"], [917, 179, "Sealy"], [1069, 176, "Katy"],
  [1101, 201, "Cinco Ranch"], [1000, 232, "Simonton"], [959, 258, "Wallis"], [837, 278, "Eagle Lake"], [1438, 240, "La Porte"],
  [1457, 203, "Baytown"], [1160, 275, "Sugar Land"], [1331, 64, "Humble"], [1342, 224, "Pasadena"], [1278, 191, "Houston", "city"],
  [1750, 38, "China"], [1974, 53, "Bridge City"], [1907, 77, "Nederland"], [1789, 102, "Fannett"], [1931, 124, "Port Arthur"],
  [1763, 137, "Hamshire"], [1728, 175, "Stowell"], [2212, 170, "Cameron"], [2310, 170, "Creole"],
  [2123, 91, "Sabine", "park"], [2123, 109, "National", "park"], [2123, 127, "Wildlife", "park"], [2123, 145, "Refuge", "park"],
  [1869, 214, "McFaddin", "park"], [1869, 232, "National", "park"], [1869, 250, "Wildlife", "park"], [1869, 268, "Refuge", "park"],
  [1540, 246, "Trinity Bay", "sea", -62], [2222, 90, "Calcasieu Lake", "sea", -84]
];
document.getElementById("places").innerHTML = places.map(([x, y, t, cls = "", turn = 0]) =>
  `<text class="${cls}" x="${x}" y="${y}" dy=".35em" transform="rotate(${turn} ${x} ${y})">${t}</text>`).join("");

const shields = [
  ["state", 221, 75, 130], ["state", 395, 80, 304], ["state", 571, 39, 77], ["state", 536, 96, 71], ["state", 637, 84, 159],
  ["state", 172, 175, 130], ["state", 191, 207, 80], ["state", 92, 215, 123], ["state", 473, 257, 95], ["state", 342, 269, 304],
  ["state", 758, 258, 71], ["state", 65, 259, ""], ["int", 389, 238, 10], ["state", 847, 50, 36], ["state", 819, 78, 159],
  ["state", 1096, 95, 99], ["state", 1491, 90, 146], ["us", 1378, 147, 90], ["int", 831, 201, 10], ["int", 1012, 180, 10],
  ["wide", 1303, 164, 610], ["int", 1418, 172, 10], ["int", 1308, 106, 69], ["state", 1505, 198, 99], ["state", 949, 278, 60],
  ["state", 1121, 246, 99], ["us", 1206, 133, 290], ["us", 1703, 46, 90], ["us", 1882, 57, 96], ["state", 1932, 99, 73],
  ["int", 1702, 154, 10], ["state", 1780, 155, 73], ["state", 2324, 132, 27], ["state", 2158, 184, 27], ["state", 1984, 188, 82],
  ["state", 1951, 204, 87], ["state", 1734, 238, 124], ["us", 292, 284, ""]
];
document.getElementById("shields").innerHTML = shields.map(([kind, x, y, n]) =>
  `<use href="#s-${kind}" x="${x}" y="${y}"/><text class="${kind}" x="${x}" y="${y}" dy=".36em">${n}</text>`).join("");

// Pin heads, in thirds of a pixel from the city's corner of the map.
const heads = [[283, -12], [700, 20], [752, 30], [790, 80], [435, 42], [195, 83], [325, 68], [342, 74], [292, 115], [300, 122], [378, 120],
  [450, 133], [255, 150], [405, 184], [552, 110], [650, 117], [838, 222], [213, 245], [326, 236], [150, 292], [642, 240], [586, 292],
  [126, 358], [325, 330], [495, 312], [763, 378], [435, 340], [555, 348], [565, 359], [325, 365], [385, 357], [288, 390], [425, 364],
  [485, 370], [473, 372], [78, 418], [270, 441], [597, 430], [511, 455], [385, 448], [330, 460], [378, 468], [352, 492], [427, 485],
  [667, 475], [635, 505], [672, 537], [395, 527], [847, 493], [820, 528], [930, 517], [875, 553], [922, 566], [748, 575], [400, 562],
  [500, 562], [630, 576], [425, 592], [326, 587], [597, 618], [455, 636], [272, 625], [251, 662], [326, 660], [145, 680], [565, 724],
  [780, 680], [805, 680], [907, 670], [705, 705], [900, 716], [675, 732], [942, 736], [718, 740], [790, 745], [350, 744], [825, 757],
  [345, 773], [665, 760], [1010, 780]];
document.getElementById("pins").innerHTML = heads.sort((a, b) => a[1] - b[1]).map(([x, y]) =>
  `<use href="#pin" x="${Math.round(1080 + x / 3)}" y="${Math.round(53 + y / 3)}"/>`).join("");
```
